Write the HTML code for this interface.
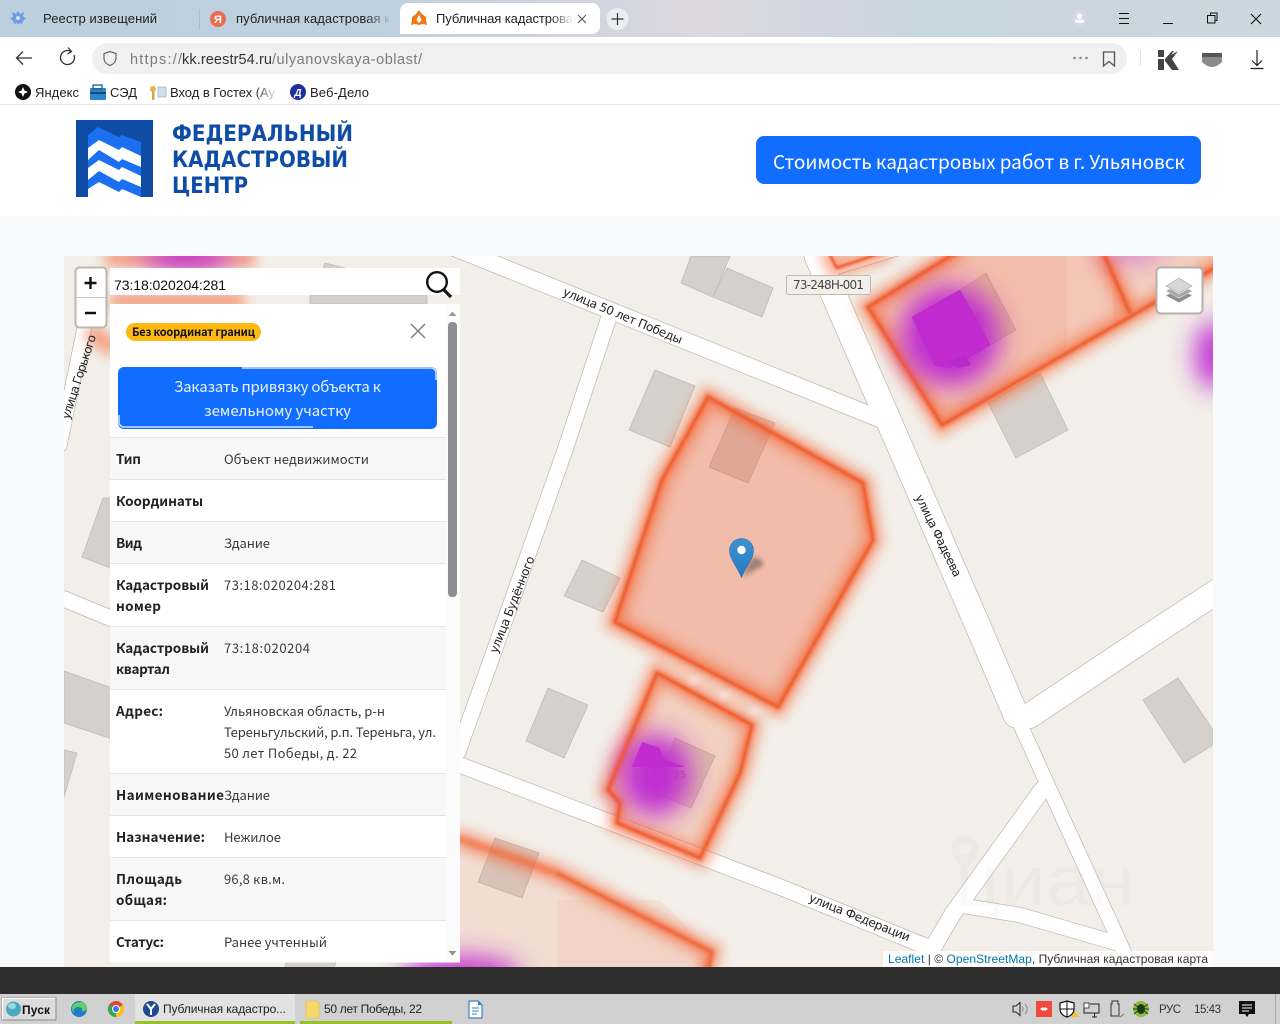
<!DOCTYPE html>
<html lang="ru"><head><meta charset="utf-8"><title>Публичная кадастровая карта</title>
<style>
html,body{margin:0;padding:0;width:1280px;height:1024px;overflow:hidden;background:#fff}
svg{display:block}
.s{font-family:"Liberation Sans","Noto Sans CJK SC",sans-serif}
.n{font-family:"Noto Sans CJK SC","Liberation Sans",sans-serif;font-size:13px;fill:#3a3a3a}
.b{font-family:"Noto Sans CJK SC","Liberation Sans",sans-serif;font-size:13.5px;font-weight:700;fill:#222}
.m{font-family:"DejaVu Sans",sans-serif;font-size:12px;fill:#222}
</style></head><body>
<svg width="1280" height="1024" viewBox="0 0 1280 1024" xmlns="http://www.w3.org/2000/svg">
<defs>
<linearGradient id="top" x1="0" x2="1" y1="0" y2="0"><stop offset="0" stop-color="#bccfdd"/><stop offset=".3" stop-color="#bfd0dd"/><stop offset=".55" stop-color="#dcd7e0"/><stop offset=".72" stop-color="#c8d6df"/><stop offset="1" stop-color="#cbd7de"/></linearGradient>
<linearGradient id="f1" gradientUnits="userSpaceOnUse" x1="365" x2="392" y1="0" y2="0"><stop offset="0" stop-color="#222"/><stop offset="1" stop-color="#222" stop-opacity="0"/></linearGradient>
<linearGradient id="f2" gradientUnits="userSpaceOnUse" x1="550" x2="574" y1="0" y2="0"><stop offset="0" stop-color="#222"/><stop offset="1" stop-color="#222" stop-opacity="0"/></linearGradient>
<linearGradient id="f3" gradientUnits="userSpaceOnUse" x1="255" x2="278" y1="0" y2="0"><stop offset="0" stop-color="#222"/><stop offset="1" stop-color="#222" stop-opacity="0"/></linearGradient>
<linearGradient id="pin" x1="0" x2="0" y1="0" y2="1"><stop offset="0" stop-color="#3f93d3"/><stop offset="1" stop-color="#2679c2"/></linearGradient>
<clipPath id="map"><rect x="64" y="256" width="1149" height="711"/></clipPath>
<filter id="b6" x="-30%" y="-30%" width="160%" height="160%"><feGaussianBlur stdDeviation="6"/></filter>
<filter id="b3" x="-30%" y="-30%" width="160%" height="160%"><feGaussianBlur stdDeviation="3"/></filter>
<filter id="b2" x="-30%" y="-30%" width="160%" height="160%"><feGaussianBlur stdDeviation="2.500"/></filter>
<filter id="b1" x="-10%" y="-10%" width="120%" height="120%"><feGaussianBlur stdDeviation="1.100"/></filter>
<filter id="b14" x="-80%" y="-80%" width="260%" height="260%"><feGaussianBlur stdDeviation="13"/></filter>
<filter id="sh" x="-50%" y="-50%" width="200%" height="200%"><feGaussianBlur stdDeviation="2.500"/></filter>
</defs>

<!-- browser top -->
<rect width="1280" height="37" fill="url(#top)"/>
<rect y="37" width="1280" height="67" fill="#fff"/>
<rect y="104" width="1280" height="1" fill="#e6e6e6"/>
<path d="M18 11l2 3 4-2-1 5 3 1-3 3-1 3-3-1-1 2-1-2-3 1-1-3-3-3 3-1-1-5 4 2Z" fill="#6f9fe0"/><circle cx="18" cy="18" r="2" fill="#d5e2f3"/>
<text class="s" x="43" y="23" font-size="13" fill="#222" textLength="114">Реестр извещений</text>
<rect x="199" y="9" width="1" height="20" fill="#a9bac7"/>
<circle cx="218" cy="19" r="8" fill="#ee6a50"/><text class="s" x="218" y="23" font-size="11" font-weight="700" fill="#fff" text-anchor="middle">Я</text>
<text class="s" x="236" y="23" font-size="13" fill="url(#f1)" textLength="154">публичная кадастровая к</text>
<path d="M400 34V11a8 8 0 0 1 8-8H592a8 8 0 0 1 8 8V26a8 8 0 0 1-8 8Z" fill="#fff"/>
<path d="M419 10l3 4 4 3v3l1 5-4-1-4 1-4-1-4 1 1-5v-3l4-3Z" fill="#ef7a1a"/><path d="M419 15l2.500 5-2.500 3-2.500-3Z" fill="#fff"/>
<text class="s" x="436" y="23" font-size="13" fill="url(#f2)" textLength="137">Публичная кадастрова</text>
<path d="M578 15l8 8M586 15l-8 8" stroke="#555" stroke-width="1.100"/>
<circle cx="617.500" cy="19" r="11" fill="#e9eef3"/><path d="M617.500 13v12M611.500 19h12" stroke="#333" stroke-width="1.200"/>
<circle cx="1079.500" cy="18" r="8" fill="#d5d6e8"/><circle cx="1079.500" cy="16" r="2.800" fill="#fff"/><rect x="1075" y="19.500" width="9" height="3.500" rx="1.500" fill="#fff"/>
<path d="M1119 13.500h10M1119 18.500h10M1119 23.500h10" stroke="#111" stroke-width="1"/>
<path d="M1163 23.500h10" stroke="#111" stroke-width="1"/>
<path d="M1207.500 15.500h7.500v7.500h-7.500ZM1210.500 15.500v-2.500h6.500v7.500h-2" fill="none" stroke="#111" stroke-width="1"/>
<path d="M1251 14l10 10M1261 14l-10 10" stroke="#111" stroke-width="1.100"/>

<!-- toolbar -->
<path d="M32 58H17M23 51.500L16.500 58l6.500 6.500" fill="none" stroke="#333" stroke-width="1.300"/>
<path d="M74 55a7 7 0 1 1-3-3.500M68 47.500l3.500 4-4 2.500" fill="none" stroke="#333" stroke-width="1.300"/>
<rect x="92" y="43" width="1035" height="31" rx="15.500" fill="#f0f0f0"/>
<path d="M110 51.500l6 2v4.500c0 4-3 6.500-6 7.500-3-1-6-3.500-6-7.500v-4.500Z" fill="none" stroke="#666" stroke-width="1.200"/>
<text class="s" y="64" font-size="14.500"><tspan x="130" fill="#7c7c7c" textLength="52">https://</tspan><tspan x="182" fill="#333" textLength="90">kk.reestr54.ru</tspan><tspan x="272" fill="#7c7c7c" textLength="150">/ulyanovskaya-oblast/</tspan></text>
<circle cx="1074.500" cy="58" r="1.300" fill="#888"/><circle cx="1080.500" cy="58" r="1.300" fill="#888"/><circle cx="1086.500" cy="58" r="1.300" fill="#888"/>
<path d="M1103.500 52h11v14l-5.500-4.500-5.500 4.500Z" fill="none" stroke="#555" stroke-width="1.300"/>
<rect x="1140" y="51" width="1" height="15" fill="#e3e3e3"/>
<path d="M1158 50h6v7h-6ZM1158 59h6v11h-6ZM1165 59l7-8h2l-3 4 7-4-6 8 7 11h-7l-7-9Z" fill="#444"/>
<path d="M1202 53h20v9c-3 3-7 5-10 5s-7-2-10-5Z" fill="#8a8a8a"/><rect x="1202" y="53" width="20" height="4" fill="#555"/>
<path d="M1257 50v15M1252 60.500l5 5 5-5M1250.500 68.500h13" fill="none" stroke="#222" stroke-width="1.200"/>

<!-- bookmarks -->
<circle cx="23" cy="92" r="8" fill="#111"/><path d="M23 87l1.500 3.500L28 92l-3.500 1.500L23 97l-1.500-3.500L18 92l3.500-1.500Z" fill="#fff"/>
<text class="s" x="35" y="97" font-size="13" fill="#222" textLength="44">Яндекс</text>
<rect x="90" y="88" width="16" height="12" rx="1" fill="#2a86c8"/><rect x="93" y="85" width="9" height="4" fill="none" stroke="#1b5f92" stroke-width="1.300"/><rect x="90" y="92" width="16" height="2" fill="#134a78"/>
<text class="s" x="110" y="97" font-size="13" fill="#222" textLength="27">СЭД</text>
<circle cx="153" cy="89" r="3" fill="#e3b44d"/><rect x="152" y="91" width="2.500" height="9" fill="#d9a63c"/><rect x="158" y="87" width="8" height="10" fill="#cfe0ec" stroke="#9ab" stroke-width=".7"/>
<text class="s" x="170" y="97" font-size="13" fill="url(#f3)" textLength="105">Вход в Гостех (Ау</text>
<circle cx="298" cy="92" r="8" fill="#1e2f9e"/><text class="s" x="298" y="96" font-size="10" font-style="italic" font-weight="700" fill="#fff" text-anchor="middle">Д</text>
<text class="s" x="310" y="97" font-size="13" fill="#222" textLength="59">Веб-Дело</text>

<!-- site header -->
<rect y="105" width="1280" height="111" fill="#fff"/>
<rect y="216" width="1280" height="751" fill="#f9fafc"/>
<rect x="76" y="120" width="77" height="77" fill="#0e4ca6"/>
<path d="M88 135L98 127L119 137L122 135L141 142V197H88Z" fill="#1a70f0"/>
<path d="M88 148L99 140L119 150L122 147L141 156V167L122 159L119 162L99 150L88 160Z" fill="#fff"/>
<path d="M88 168L99 160L119 170L122 167L141 176V187L122 179L119 182L99 171L88 180Z" fill="#fff"/>
<path d="M88 197V189L99 182L119 192L122 189L141 197Z" fill="#fff"/>
<g font-family="'DejaVu Sans',sans-serif" font-weight="700" font-size="22" fill="#0e4ca6">
<text x="172" y="141" textLength="181" lengthAdjust="spacingAndGlyphs">ФЕДЕРАЛЬНЫЙ</text>
<text x="172" y="167" textLength="176" lengthAdjust="spacingAndGlyphs">КАДАСТРОВЫЙ</text>
<text x="172" y="193" textLength="76" lengthAdjust="spacingAndGlyphs">ЦЕНТР</text>
</g>
<rect x="756" y="136" width="445" height="48" rx="8" fill="#116dff"/>
<text class="n" x="773" y="169" style="font-size:19px;fill:#fff" textLength="412">Стоимость кадастровых работ в г. Ульяновск</text>

<!-- map -->
<g clip-path="url(#map)">
<rect x="64" y="256" width="1149" height="711" fill="#f2efe9"/>
<g fill="none" stroke="#bdbab4" stroke-linejoin="round" stroke-linecap="round">
<path d="M440 242L880 419" stroke-width="18"/>
<path d="M64 599L110 618L460 765L780 887L930 948" stroke-width="17"/>
<path d="M608 320L565 450L491 660L458 752" stroke-width="16.500"/>
<path d="M817 256L984 640L1016 715" stroke-width="26.500"/>
<path d="M1016 715L1050 790L1130 965" stroke-width="15.500"/>
<path d="M1029 716L1143 640L1230 583" stroke-width="26"/>
<path d="M1042 790L952 915L920 970" stroke-width="18"/>
<path d="M958 905L1020 915L1116 943" stroke-width="16"/>
<path d="M90 300L60 445" stroke-width="15"/>
<path d="M833 272L905 250" stroke-width="8"/>
</g>
<g fill="none" stroke="#fff" stroke-linejoin="round" stroke-linecap="round">
<path d="M440 242L880 419" stroke-width="16.500"/>
<path d="M64 599L110 618L460 765L780 887L930 948" stroke-width="15.500"/>
<path d="M608 320L565 450L491 660L458 752" stroke-width="15"/>
<path d="M817 256L984 640L1016 715" stroke-width="25"/>
<path d="M1016 715L1050 790L1130 965" stroke-width="14"/>
<path d="M1029 716L1143 640L1230 583" stroke-width="24.500"/>
<path d="M1042 790L952 915L920 970" stroke-width="16.500"/>
<path d="M958 905L1020 915L1116 943" stroke-width="14.500"/>
<path d="M90 300L60 445" stroke-width="13.500"/>
<path d="M833 272L905 250" stroke-width="6.500"/>
</g>
<g fill="#d6d0ca" stroke="#bdb7b1" stroke-width=".7">
<path d="M691 256L730 256L713 297L681 283Z"/>
<path d="M727 268L773 288L762 317L713 297Z"/>
<path d="M655 370L695 386L670 447L629 430Z"/>
<path d="M735 408L775 423L748 483L709 467Z"/>
<path d="M582 560L620 578L603 612L564 596Z"/>
<path d="M548 688L588 705L564 758L526 741Z"/>
<path d="M495 838L539 853L522 898L478 882Z"/>
<path d="M675 738L715 756L691 808L652 792Z"/>
<path d="M960 290L986 273L1016 330L990 345Z"/>
<path d="M1040 373L1068 430L1016 458L988 403Z"/>
<path d="M1178 678L1213 730L1213 745L1184 763L1143 700Z"/>
<path d="M103 498L115 498L115 570L82 557Z"/>
<path d="M64 671L115 689L115 740L64 723Z"/>
<path d="M64 750L77 753L64 797Z"/>
<path d="M325 263L345 268L340 272L322 272Z"/>
<rect x="310" y="295" width="117" height="9"/>
<path d="M287 960L337 960L333 970L284 970Z"/>
</g>
<text x="680" y="778" font-family="'DejaVu Sans',sans-serif" font-size="9.500" fill="#8a5a9a" text-anchor="middle">25</text>
<text x="975" y="320" font-family="'DejaVu Sans',sans-serif" font-size="9.500" fill="#9a4ab0" text-anchor="middle">19</text>
<g fill="#aaa" opacity=".06"><text x="955" y="905" font-family="'Liberation Sans',sans-serif" font-size="70" textLength="180" lengthAdjust="spacingAndGlyphs">циан</text><path d="M965 835a14 14 0 0 1 14 14c0 8-9 16-14 24-5-8-14-16-14-24a14 14 0 0 1 14-14Zm0 8a6 6 0 1 0 0 12 6 6 0 0 0 0-12Z"/></g>

<!-- parcels -->
<g fill="#f0653a" stroke="none">
<path d="M708 397L863 483L873 540L778 707L615 622L662 480Z" fill-opacity=".37" filter="url(#b3)"/>
<path d="M657 673L752 725L740 773L700 858L617 823L620 803L608 790Z" fill-opacity=".22" filter="url(#b3)"/>
<path d="M868 307L960 250L1102 250L1130 313L942 425Z" fill-opacity=".36" filter="url(#b3)"/>
<path d="M1102 250L1225 250L1225 262L1130 313Z" fill-opacity=".22" filter="url(#b3)"/>
<path d="M1067 256L1113 256L1113 340L1067 360Z" fill="#fff" fill-opacity=".15"/>
<path d="M455 837L557 873L712 952L705 975L455 975Z" fill-opacity=".13"/>
<path d="M557 900L660 900L712 952L705 975L557 975Z" fill-opacity=".07"/>
</g>
<g fill="none" stroke="#f4693a" stroke-width="19" stroke-linejoin="miter" filter="url(#b6)" opacity=".55">
<path id="p1" d="M708 397L863 483L873 540L778 707L615 622L662 480Z"/>
<path d="M657 673L752 725L740 773L700 858L617 823L620 803L608 790Z"/>
<path d="M827 250L837 268L890 250"/>
<path d="M960 250L868 307L942 425L1225 262M1102 250L1130 313"/>
<path d="M455 837L557 873L712 952L705 975"/>
<path d="M88 330L115 350"/>
<path d="M110 302L245 302M105 258L255 258"/>
</g>
<g fill="none" stroke="#f2602f" stroke-width="7" stroke-linejoin="miter" filter="url(#b2)" opacity=".55">
<path d="M708 397L863 483L873 540L778 707L615 622L662 480Z"/>
<path d="M657 673L752 725L740 773L700 858L617 823L620 803L608 790Z"/>
<path d="M960 250L868 307L942 425L1225 262M1102 250L1130 313"/>
<path d="M455 837L557 873L712 952L705 975"/>
</g>
<!-- magenta blobs -->
<g fill="#c02fd2" filter="url(#b14)">
<circle cx="950" cy="336" r="50"/>
<ellipse cx="655" cy="775" rx="36" ry="41"/>
<ellipse cx="1215" cy="355" rx="20" ry="34"/>
<ellipse cx="187" cy="254" rx="45" ry="16"/>
<ellipse cx="460" cy="975" rx="60" ry="18"/>
<ellipse cx="1130" cy="250" rx="34" ry="10" opacity=".6"/>
</g>
<g fill="none" stroke="#f0582a" stroke-width="2.600" stroke-linejoin="miter" filter="url(#b1)">
<path d="M708 397L863 483L873 540L778 707L615 622L662 480Z"/>
<path d="M657 673L752 725L740 773L700 858L617 823L620 803L608 790Z"/>
<path d="M960 250L868 307L942 425L1225 262M1102 250L1130 313"/>
<path d="M827 250L837 268L890 250"/>
<path d="M557 873L712 952L708 975" opacity=".7"/>
</g>
<path d="M642 742L660 748L662 758L685 767L632 767Z" fill="#c22bd0"/>
<path d="M912 317L960 290L990 345L950 368L935 365Z" fill="#c22bd0" stroke="#b02ac2" stroke-width=".5"/>
<path d="M947 362L965 355L971 365L957 368Z" fill="#b82ac8"/>
<g fill="#fff" opacity=".55" filter="url(#b3)"><ellipse cx="694" cy="680" rx="7" ry="2.500"/><ellipse cx="724" cy="695" rx="7" ry="2.500"/><ellipse cx="755" cy="711" rx="7" ry="2.500"/></g>

<!-- labels -->
<text class="m" transform="translate(562,295) rotate(22.500)" textLength="128">улица 50 лет Победы</text>
<text class="m" transform="translate(808,901) rotate(22)" textLength="108">улица Федерации</text>
<text class="m" transform="translate(915,497) rotate(64)" textLength="90">улица Фадеева</text>
<text class="m" transform="translate(497,654) rotate(-68.500)" textLength="103">улица Будённого</text>
<text class="m" transform="translate(69,420) rotate(-72)" textLength="88">улица Горького</text>
<rect x="786.500" y="275.500" width="84" height="19" rx="2" fill="#f2efe9" stroke="#bdbab4"/>
<text x="793" y="289" font-family="'DejaVu Sans',sans-serif" font-size="12" fill="#444" textLength="71">73-248Н-001</text>
<!-- attribution -->
<rect x="883" y="951" width="330" height="16" fill="#fff" fill-opacity=".8"/>
<text class="s" x="888" y="963" font-size="12" fill="#333" textLength="320"><tspan fill="#0078a8">Leaflet</tspan> | © <tspan fill="#0078a8">OpenStreetMap</tspan>, Публичная кадастровая карта</text>
</g>

<!-- marker -->
<path d="M742 577L762 566C766 562 758 556 752 558Z" fill="#333" opacity=".45" filter="url(#sh)"/>
<path d="M741.500 577.500C738 568 729.500 559 729.500 550.500A12 12 0 0 1 753.500 550.500C753.500 559 745 568 741.500 577.500Z" fill="url(#pin)" stroke="#2a76b8" stroke-width=".6"/>
<circle cx="741.500" cy="550" r="4.200" fill="#fff"/>

<!-- layers control -->
<rect x="1156.500" y="267.500" width="46" height="46" rx="4" fill="#fff" stroke="#b3b0ae" stroke-width="2"/>
<path d="M1166 295.500l13 7 13-7-4-2-9 5-9-5Z" fill="#8f8f8f"/><path d="M1166 291l13 7 13-7-4-2-9 5-9-5Z" fill="#a9a9a9"/><path d="M1166 286l13-8 13 8-13 7Z" fill="#d6d6d6" stroke="#aaa" stroke-width=".6"/>

<!-- zoom control -->
<rect x="75.500" y="267.500" width="31" height="60" rx="4" fill="#fff" stroke="#b9b6b3" stroke-width="2"/>
<rect x="76" y="297" width="30" height="1" fill="#ccc"/>
<path d="M84.500 283h12M90.500 277v12M85 313h11" stroke="#111" stroke-width="2.400"/>

<!-- search -->
<rect x="110" y="268" width="350" height="27" fill="#fff"/>
<text class="s" x="114" y="290" font-size="14" fill="#111" textLength="112">73:18:020204:281</text>
<circle cx="437" cy="282" r="9.800" fill="none" stroke="#111" stroke-width="2.400"/><path d="M444 290l7 7" stroke="#111" stroke-width="3.200"/>

<!-- panel -->
<rect x="110" y="304" width="350" height="658.500" fill="#fff"/>
<rect x="446" y="304" width="14" height="658.500" fill="#fbfbfc"/>
<path d="M448.500 316l4-4.500 4 4.500Z" fill="#9a9a9a"/>
<rect x="448" y="322" width="9" height="275" rx="4" fill="#8e8e90"/>
<path d="M448.500 951l4 4.500 4-4.500Z" fill="#8e8e8e"/>
<rect x="126" y="323" width="135" height="18" rx="9" fill="#fdb812"/>
<text class="b" x="132" y="336" style="font-size:11px;fill:#111" textLength="123">Без координат границ</text>
<path d="M411 324l14 14M425 324l-14 14" stroke="#777" stroke-width="1.300"/>
<rect x="118" y="367" width="319" height="62" rx="6" fill="#116dff"/>
<path d="M242 368H431a5 5 0 0 1 5 5V380" fill="none" stroke="#cfe2ff" stroke-width="1.500"/>
<path d="M119 415V422a5 5 0 0 0 5 5H313" fill="none" stroke="#cfe2ff" stroke-width="1.500"/>
<text class="n" x="174" y="392" style="font-size:15px;fill:#eaf2ff" textLength="207">Заказать привязку объекта к</text>
<text class="n" x="204" y="416" style="font-size:15px;fill:#eaf2ff" textLength="147">земельному участку</text>

<g fill="#f8f8f8">
<rect x="110" y="438" width="336" height="41"/><rect x="110" y="522" width="336" height="41"/><rect x="110" y="627" width="336" height="62"/><rect x="110" y="774" width="336" height="41"/><rect x="110" y="858" width="336" height="62"/>
</g>
<g fill="#e6e6e6">
<rect x="110" y="437" width="336" height="1"/><rect x="110" y="479" width="336" height="1"/><rect x="110" y="521" width="336" height="1"/><rect x="110" y="563" width="336" height="1"/><rect x="110" y="626" width="336" height="1"/><rect x="110" y="689" width="336" height="1"/><rect x="110" y="773" width="336" height="1"/><rect x="110" y="815" width="336" height="1"/><rect x="110" y="857" width="336" height="1"/><rect x="110" y="920" width="336" height="1"/>
</g>
<text class="b" x="116" y="464" textLength="25">Тип</text>
<text class="n" x="224" y="464" textLength="145">Объект недвижимости</text>
<text class="b" x="116" y="506" textLength="87">Координаты</text>
<text class="b" x="116" y="548" textLength="26">Вид</text>
<text class="n" x="224" y="548" textLength="46">Здание</text>
<text class="b" x="116" y="590" textLength="93">Кадастровый</text>
<text class="b" x="116" y="611" textLength="45">номер</text>
<text class="n" x="224" y="590" textLength="112">73:18:020204:281</text>
<text class="b" x="116" y="653" textLength="93">Кадастровый</text>
<text class="b" x="116" y="674" textLength="54">квартал</text>
<text class="n" x="224" y="653" textLength="86">73:18:020204</text>
<text class="b" x="116" y="716" textLength="47">Адрес:</text>
<text class="n" x="224" y="716" textLength="161">Ульяновская область, р-н</text>
<text class="n" x="224" y="737" textLength="212">Тереньгульский, р.п. Тереньга, ул.</text>
<text class="n" x="224" y="758" textLength="133">50 лет Победы, д. 22</text>
<text class="b" x="116" y="800" textLength="108">Наименование</text>
<text class="n" x="224" y="800" textLength="46">Здание</text>
<text class="b" x="116" y="842" textLength="89">Назначение:</text>
<text class="n" x="224" y="842" textLength="57">Нежилое</text>
<text class="b" x="116" y="884" textLength="66">Площадь</text>
<text class="b" x="116" y="905" textLength="51">общая:</text>
<text class="n" x="224" y="884" textLength="61">96,8 кв.м.</text>
<text class="b" x="116" y="947" textLength="48">Статус:</text>
<text class="n" x="224" y="947" textLength="103">Ранее учтенный</text>

<!-- dark band + taskbar -->
<rect y="967" width="1280" height="27" fill="#2d2d2d"/>
<rect y="994" width="1280" height="30" fill="#d1d1d1"/>
<rect x="2" y="998" width="54" height="22" fill="#dcdcdc" stroke="#8a8a8a"/>
<path d="M2.500 1019.500V998.500H55.500" fill="none" stroke="#fff"/>
<circle cx="13.500" cy="1009" r="7.500" fill="#4aa9c0"/><ellipse cx="12" cy="1006" rx="4" ry="3" fill="#9ad8dc"/>
<text class="s" x="22" y="1014" font-size="12" font-weight="700" fill="#111" textLength="28">Пуск</text>
<circle cx="79" cy="1009" r="8" fill="#1d7fc4"/><path d="M72 1007c2-6 12-7 15-1 1 4-2 6-5 5 1-2-1-4-4-4-3 0-5 2-4 6-2-2-2-4-2-6Z" fill="#5fd06a"/>
<circle cx="116" cy="1009" r="8" fill="#e1483a"/><path d="M116 1009L123 1005A8 8 0 0 1 116 1017Z" fill="#f5c518"/><path d="M116 1009V1017A8 8 0 0 1 109 1005Z" fill="#35a853"/><circle cx="116" cy="1009" r="4" fill="#fff"/><circle cx="116" cy="1009" r="3" fill="#3b78e7"/>
<rect x="135" y="994" width="160" height="30" fill="#e2e2e2"/>
<rect x="135" y="1021" width="160" height="3" fill="#97c02b"/>
<circle cx="151" cy="1009" r="8" fill="#1f4a8f"/><path d="M147 1004l4 5 4-5M151 1009v6" fill="none" stroke="#fff" stroke-width="2"/>
<text class="s" x="163" y="1013" font-size="12" fill="#222" textLength="123">Публичная кадастро...</text>
<rect x="300" y="1021" width="152" height="3" fill="#97c02b"/>
<path d="M306 1001h10l3 2v15h-13Z" fill="#f5d76e" stroke="#e0b93a" stroke-width=".6"/>
<text class="s" x="324" y="1013" font-size="12" fill="#222" textLength="98">50 лет Победы, 22</text>
<path d="M469 1001h9l4 4v13h-13Z" fill="#fff" stroke="#3a82c4" stroke-width="1.200"/><path d="M472 1008h7M472 1011h7M472 1014h5" stroke="#3a82c4"/><path d="M478 1001v4h4Z" fill="#3a82c4"/>

<!-- tray -->
<path d="M1013 1006h3l4-3.500v13l-4-3.500h-3Z" fill="none" stroke="#222"/><path d="M1022 1006.500a3.500 3.500 0 0 1 0 5M1025 1004a7 7 0 0 1 0 10" fill="none" stroke="#888"/>
<rect x="1036" y="1001" width="16" height="16" fill="#f04a3e"/><path d="M1040 1009l3-2v4ZM1048 1009l-3-2v4Z" fill="#fff"/><circle cx="1044" cy="1009" r="1.500" fill="#fff"/>
<path d="M1067 1001l7 2v6c0 4-3 7-7 8-4-1-7-4-7-8v-6Z" fill="#fff" stroke="#111" stroke-width="1.200"/><path d="M1067 1001v16M1060 1009h14" stroke="#111"/>
<path d="M1071 1017l4-6 4 6Z" fill="#f5c518"/>
<rect x="1084" y="1003" width="5" height="5" fill="#fff" stroke="#222" stroke-width=".8"/><path d="M1090 1004h9v9h-15v-5M1092 1017h5M1094.500 1013v4" fill="none" stroke="#222" stroke-width="1"/>
<path d="M1112 1001h6v3h1v12h-8v-12h1Z" fill="none" stroke="#333"/><path d="M1118 1015l2 2 4-3" fill="none" stroke="#777"/>
<circle cx="1141" cy="1009" r="8" fill="#8ebc3b"/><ellipse cx="1141" cy="1009" rx="4" ry="5" fill="#1c3b1c"/><path d="M1134 1004l4 3M1148 1004l-4 3M1133 1009h5M1149 1009h-5M1134 1014l4-3M1148 1014l-4-3" stroke="#1c3b1c"/>
<text class="s" x="1159" y="1013" font-size="11.500" fill="#333" textLength="22">РУС</text>
<text class="s" x="1194" y="1013" font-size="11.500" fill="#333" textLength="27">15:43</text>
<path d="M1239 1001h16v13h-6l-2 3-2-3h-6Z" fill="#111"/><path d="M1242 1005h10M1242 1008h10M1242 1011h7" stroke="#fff"/>
<rect x="1275" y="994" width="1" height="30" fill="#aaa"/>
</svg>
</body></html>
